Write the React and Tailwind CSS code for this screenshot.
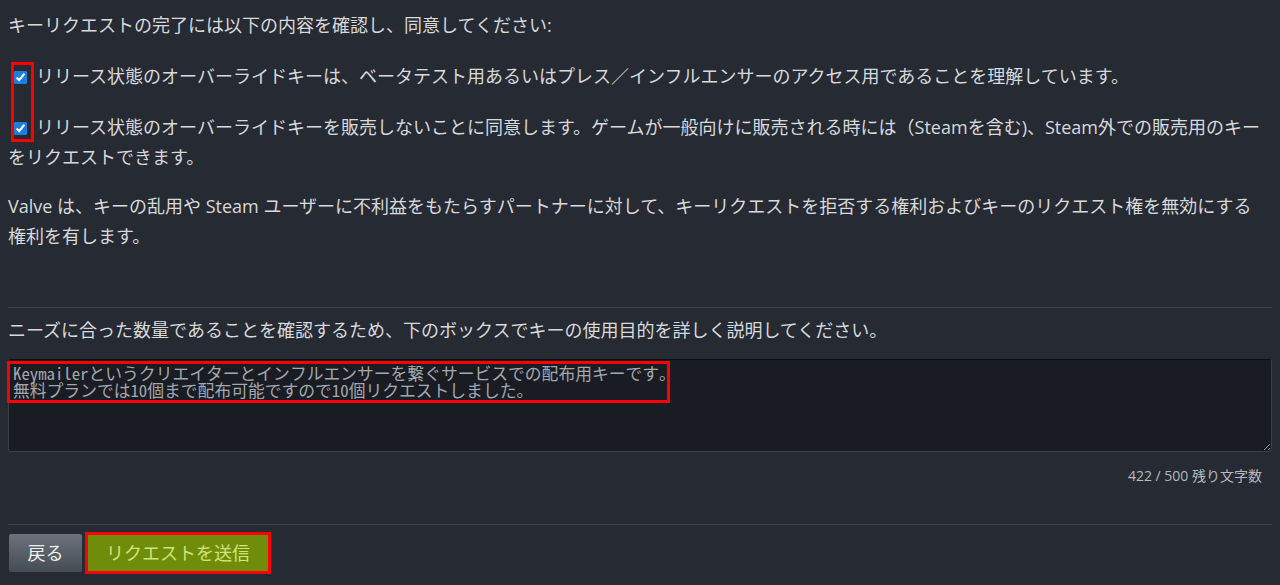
import { useState } from 'react';

function App() {
  const [text] = useState(
    'Keymailerというクリエイターとインフルエンサーを繋ぐサービスでの配布用キーです。\n無料プランでは10個まで配布可能ですので10個リクエストしました。'
  );

  return (
    <div
      className="min-h-[585px] bg-[#262a33] px-2 pt-[10px] text-[18px] leading-[30px] text-[#d7d9db]"
      style={{ fontFamily: '"Open Sans", "Noto Sans CJK JP", sans-serif' }}
    >
      <p>キーリクエストの完了には以下の内容を確認し、同意してください:</p>

      {/* 同意チェックボックス */}
      <div className="relative mt-[21px] pr-[8px]">
        <p>
          <input
            type="checkbox"
            checked
            readOnly
            className="mx-[6px] h-[13px] w-[13px] align-[-1px] accent-[#1a7fe0]"
          />
          <span className="ml-[3px]">
            リリース状態のオーバーライドキーは、ベータテスト用あるいはプレス／インフルエンサーのアクセス用であることを理解しています。
          </span>
        </p>
        <p className="mt-[21px]">
          <input
            type="checkbox"
            checked
            readOnly
            className="mx-[6px] h-[13px] w-[13px] align-[-1px] accent-[#1a7fe0]"
          />
          <span className="ml-[3px]">
            リリース状態のオーバーライドキーを販売しないことに同意します。ゲームが一般向けに販売される時には（Steamを含む)、Steam外での販売用のキーをリクエストできます。
          </span>
        </p>
        <div className="pointer-events-none absolute left-[3px] top-[1px] h-[80px] w-[23px] border-[3px] border-[#ff0000]" />
      </div>

      <p className="mt-[19px] pr-[8px]">
        Valve は、キーの乱用や Steam ユーザーに不利益をもたらすパートナーに対して、キーリクエストを拒否する権利およびキーのリクエスト権を無効にする権利を有します。
      </p>

      <div className="mt-[56px] border-t border-[#3b414b]" />

      <p className="mt-[7px]">ニーズに合った数量であることを確認するため、下のボックスでキーの使用目的を詳しく説明してください。</p>

      {/* 説明テキストエリア */}
      <div className="relative mt-[14px]">
        <textarea
          value={text}
          readOnly
          className="block h-[93px] w-full resize-y rounded-[3px] border border-[#3a3f48] border-t-[#0d0f13] bg-[#191c23] px-[4px] pt-[5px] pb-[3px] text-[16.8px] leading-[17px] text-[#a3a8ae] outline-none"
          style={{ fontFamily: '"Noto Sans Mono CJK JP", "DejaVu Sans Mono", "Noto Sans CJK JP", monospace' }}
        />
        <div className="pointer-events-none absolute left-[-1px] top-[2px] h-[42px] w-[663px] border-[3px] border-[#ff0000]" />
      </div>

      <div className="mt-[14px] pr-[10px] text-right text-[14px] leading-[20px] text-[#b4b9bf]">
        422 / 500 残り文字数
      </div>

      <div className="mt-[38px] border-t border-[#3b414b]" />

      {/* ボタン */}
      <div className="mt-[7px] flex items-center gap-[3px] pl-[1px]">
        <button className="h-[38px] w-[73px] rounded-[2px] bg-gradient-to-b from-[#6b727b] to-[#464c54] text-[18px] text-[#eef0f2]">
          戻る
        </button>
        <span className="border-[3px] border-[#ff0000]">
          <button className="block h-[36px] w-[180px] bg-[#6f8d0b] text-[18px] text-[#cfe47b]">
            リクエストを送信
          </button>
        </span>
      </div>
    </div>
  );
}

export default App;
